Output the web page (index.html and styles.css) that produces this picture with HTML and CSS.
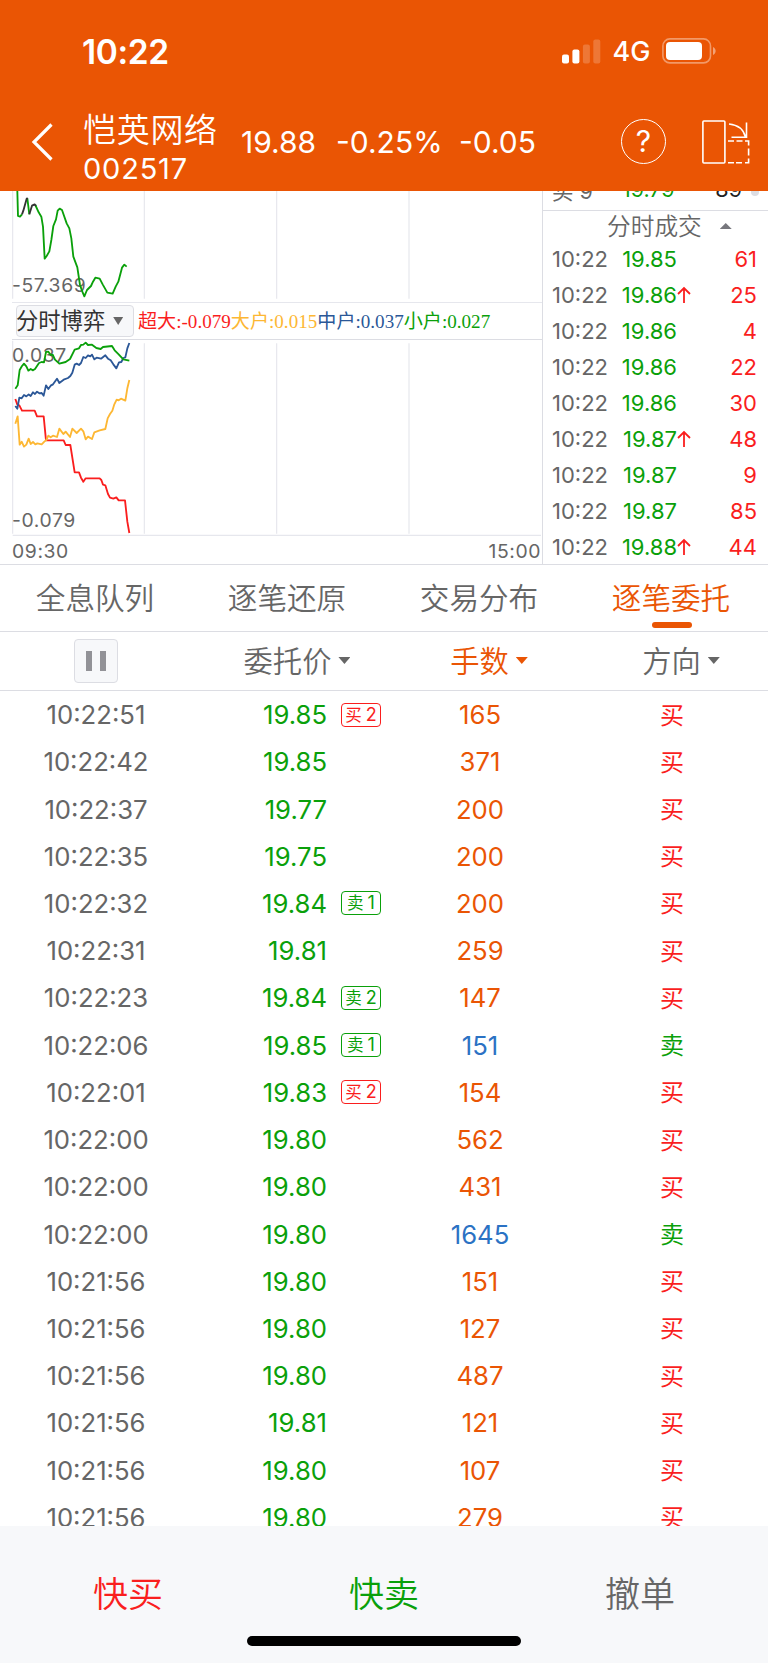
FILE: index.html
```html
<!DOCTYPE html>
<html lang="zh-CN">
  <head>
    <meta charset="UTF-8" />
    <meta name="viewport" content="width=device-width, initial-scale=1.0" />
    <title>恺英网络 002517</title>
    <link rel="stylesheet" href="styles.css">
  </head>
  <body>
    <div class="app">
      <header class="header">
        <div class="status-bar">
          <span class="clock">10:22</span>
          <div class="status-icons">
            <svg class="signal" width="39" height="25" viewBox="0 0 39 25" fill="#fff">
              <rect x="0" y="15.5" width="7" height="9" rx="2" />
              <rect x="10.4" y="10.5" width="7" height="14" rx="2" />
              <rect x="20.9" y="5.5" width="7" height="19" rx="2" opacity="0.2" />
              <rect x="31.3" y="0.5" width="7" height="24" rx="2" opacity="0.2" />
            </svg>
            <span class="network">4G</span>
            <svg class="battery" width="54" height="26" viewBox="0 0 54 26">
              <rect x="0.9" y="0.9" width="47.6" height="24" rx="7" fill="none" stroke="#fff" stroke-opacity="0.4" stroke-width="1.6" />
              <rect x="4" y="4" width="36" height="18" rx="4" fill="#fff" />
              <path d="M51 9c3.5 1.4 3.5 6.600 0 8z" fill="#fff" fill-opacity="0.45" />
            </svg>
          </div>
        </div>
        <nav class="nav">
          <svg class="back" width="24" height="40" viewBox="0 0 24 40" fill="none" stroke="#fff" stroke-width="3.2">
            <path d="M20.500 2.500L3 20l17.500 17.500" />
          </svg>
          <div class="stock">
            <div class="stock-name">恺英网络</div>
            <div class="stock-code">002517</div>
          </div>
          <div class="quote">
            <span class="q-price">19.88</span>
            <span class="q-percent">-0.25%</span>
            <span class="q-change">-0.05</span>
          </div>
          <div class="help">?</div>
          <svg class="rotate" width="48" height="46" viewBox="0 0 48 46" fill="none" stroke="#fff" stroke-width="1.6">
            <rect x="0.900" y="2" width="22" height="42" rx="1" />
            <path d="M27 5c8 .8 14.500 5 16.500 13M44.500 3.500v14.700H29.500" />
            <path d="M26 22h6M34.500 22h6M43 22h3.600v4.500M46.600 29.500v7M46.600 39.500v4.300H43M40 43.800h-6M32 43.800h-6" />
          </svg>
        </nav>
      </header>

      <section class="market">
        <div class="charts">
          <svg class="chart-flow" viewBox="0 33 1623 333" fill="none">
            <path class="grid" d="M38 33V356M433 33V356M830 33V356M1227 33V356" />
            <text class="axis-text" x="36" y="337">-57.369</text>
            <g class="line">
              <path class="c-green" d="M52 33L54 108L60 110L66 103M82 55L88 103M106 75L116 97L124 110L129 140L134 236L140 228L148 214L154 180L160 138L168 118L173 92L179 86L186 90L200 130L208 145L214 175L220 230L232 262L240 315L247 335L253 349L261 330L273 318L279 305L286 293L299 296L308 313L322 338L338 341L347 320L355 305L366 263L373 254L380 260" />
              <path class="c-dark" d="M66 103L70 92L80 56L83 54M88 103L96 77L104 73L108 78" />
            </g>
          </svg>
          <div class="indicator-bar">
            <div class="indicator-select">分时博弈<i class="caret"></i></div>
            <div class="legend"><span class="red">超大:-0.079</span><span class="yellow">大户:0.015</span><span class="navy">中户:0.037</span><span class="green">小户:0.027</span></div>
          </div>
          <svg class="chart-game" viewBox="0 30 1623 672" fill="none">
            <path class="grid" d="M38 32V611M433 40V611M830 40V611M1227 40V611M38 616H1623" />
            <text class="axis-text" x="36" y="96">0.037</text>
            <text class="axis-text" x="36" y="592">-0.079</text>
            <text class="axis-text" x="36" y="683">09:30</text>
            <text class="axis-text" x="1623" y="683" text-anchor="end">15:00</text>
            <g class="line">
              <path class="c-red" d="M46 207L52 224L58 226L66 242H104L111 259H131L138 331H191L197 345H211L224 427H237L243 443L250 455L257 445H299L304 450L309 464L316 466L324 492L330 503L340 506L349 502L356 511H375L382 575L388 609" />
              <path class="c-yellow" d="M46 281L53 259L59 344L65 335L72 350L79 344L86 326L92 342L99 336L106 343L112 340L125 343L133 335L139 330L145 317L152 322L159 317L171 321L178 296L190 312L197 305L210 321L217 296L230 309L243 296L250 304L257 328L264 320L276 327L283 307L299 301L316 297L323 265L330 252L337 242L343 223L350 209L356 211L363 206L376 212L382 175L388 150" />
              <path class="c-navy" d="M46 228L52 236L58 203L65 205L72 195L79 199L86 193L92 198L99 187L105 192L111 185L118 190L125 189L131 197L138 166L145 177L152 167L159 163L171 146L178 159L191 149L204 144L211 138L217 128L224 104L230 101L237 105L243 99L250 81L257 84L264 76L271 79L276 74L283 88L290 83L303 86L316 76L324 86L332 91L340 103L349 115L357 97L364 96L370 84L376 82L382 55L388 39" />
              <path class="c-green" d="M46 176L53 166L59 120L66 108L72 101L79 109L85 122L92 117L99 121L105 117L117 99L125 96L132 97L138 66L145 65L152 75L158 74L165 89L178 101L197 96L210 87L224 59L237 55L243 45L250 44L257 38L264 45L276 44L289 54L302 57L309 51L336 48L344 61L356 73L370 88L388 92" />
            </g>
          </svg>
        </div>

        <aside class="ticks">
          <div class="level-clip">
            <div class="level"><span>买 9</span><span class="green">19.79</span><b>89</b><i class="dot"></i></div>
          </div>
          <div class="ticks-title">分时成交<i class="caret-up"></i></div>
          <div id="tickList"></div>
        </aside>
      </section>

      <div class="tabs">
        <div class="tab">全息队列</div>
        <div class="tab">逐笔还原</div>
        <div class="tab">交易分布</div>
        <div class="tab active">逐笔委托</div>
      </div>

      <div class="columns">
        <div><button class="pause"><i></i><i></i></button></div>
        <div><span class="sort">委托价<i class="caret"></i></span></div>
        <div><span class="sort active">手数<i class="caret"></i></span></div>
        <div><span class="sort">方向<i class="caret"></i></span></div>
      </div>

      <main class="orders" id="orderList"></main>

      <footer class="footer">
        <div class="actions">
          <div class="red">快买</div>
          <div class="green">快卖</div>
          <div>撤单</div>
        </div>
        <div class="home-bar"></div>
      </footer>
    </div>

    <script>
      // price, went up, volume
      const ticks = [
        ["19.85", false, 61],
        ["19.86", true, 25],
        ["19.86", false, 4],
        ["19.86", false, 22],
        ["19.86", false, 30],
        ["19.87", true, 48],
        ["19.87", false, 9],
        ["19.87", false, 85],
        ["19.88", true, 44],
      ];

      // time, price, lots, side, queue tag
      const orders = [
        ["10:22:51", "19.85", 165, "买", "买2"],
        ["10:22:42", "19.85", 371, "买"],
        ["10:22:37", "19.77", 200, "买"],
        ["10:22:35", "19.75", 200, "买"],
        ["10:22:32", "19.84", 200, "买", "卖1"],
        ["10:22:31", "19.81", 259, "买"],
        ["10:22:23", "19.84", 147, "买", "卖2"],
        ["10:22:06", "19.85", 151, "卖", "卖1"],
        ["10:22:01", "19.83", 154, "买", "买2"],
        ["10:22:00", "19.80", 562, "买"],
        ["10:22:00", "19.80", 431, "买"],
        ["10:22:00", "19.80", 1645, "卖"],
        ["10:21:56", "19.80", 151, "买"],
        ["10:21:56", "19.80", 127, "买"],
        ["10:21:56", "19.80", 487, "买"],
        ["10:21:56", "19.81", 121, "买"],
        ["10:21:56", "19.80", 107, "买"],
        ["10:21:56", "19.80", 279, "买"],
      ];

      const arrow = '<svg width="14" height="18" viewBox="0 0 14 18" fill="none" stroke="currentColor" stroke-width="1.8"><path d="M7 17V2M1 8l6-6 6 6" /></svg>';

      document.getElementById("tickList").innerHTML = ticks
        .map(([price, up, volume]) => `
          <div class="tick">
            <span>10:22</span>
            <span class="tick-price">${price}</span>
            <span class="tick-arrow">${up ? arrow : ""}</span>
            <span class="tick-volume">${volume}</span>
          </div>`)
        .join("");

      document.getElementById("orderList").innerHTML = orders
        .map(([time, price, lots, side, tag]) => {
          const sell = side === "卖";
          const tagHtml = tag
            ? `<span class="tag ${tag[0] === "卖" ? "green" : "red"}">${tag[0]}<em>${tag[1]}</em></span>`
            : "";
          return `
          <div class="order">
            <span class="order-time">${time}</span>
            <span class="order-price">${price}</span>
            <span class="order-tag">${tagHtml}</span>
            <span class="order-lots ${sell ? "blue" : "orange"}">${lots}</span>
            <span class="order-side ${sell ? "green" : "red"}">${side}</span>
          </div>`;
        })
        .join("");
    </script>
  </body>
</html>
```
FILE: styles.css
```css
* {
  box-sizing: border-box;
}
body {
  margin: 0;
  font-family: Inter, "Noto Sans CJK SC", sans-serif;
  color: #666;
  background: #fff;
}
.app {
  width: 768px;
  height: 1663px;
  display: flex;
  flex-direction: column;
  overflow: hidden;
}
.red {
  color: #fa1e1e;
}
.green {
  color: #0aa00a;
}
.yellow {
  color: #fdb733;
}
.navy {
  color: #2b5797;
}
.blue {
  color: #2b72c4;
}
.orange {
  color: #ea5504;
}

/* header */
.header {
  height: 191px;
  flex: none;
  background: #ea5504;
  color: #fff;
}
.status-bar {
  height: 102px;
  padding: 0 52px 0 82px;
  display: flex;
  align-items: center;
  justify-content: space-between;
}
.clock {
  padding-top: 1px;
  font-size: 33.500px;
  font-weight: 600;
  letter-spacing: -0.400px;
}
.status-icons {
  display: flex;
  align-items: center;
}
.network {
  width: 61px;
  padding-top: 1px;
  text-align: center;
  font-size: 27px;
  font-weight: 500;
}
.nav {
  height: 89px;
  display: flex;
  align-items: center;
  padding: 0 18px 10px 31px;
}
.stock {
  width: 158px;
  margin-left: 28px;
  padding-top: 12px;
  white-space: nowrap;
}
.stock-name {
  font-size: 33px;
  line-height: 42px;
  letter-spacing: 0.7px;
  font-weight: 350;
}
.stock-code {
  font-size: 29px;
  line-height: 36px;
  letter-spacing: 0.8px;
}
.quote {
  display: flex;
  font-size: 30px;
  white-space: nowrap;
}
.q-price {
  width: 95px;
}
.q-percent {
  width: 123px;
}
.q-change {
  width: 162px;
}
.help {
  width: 45px;
  height: 45px;
  flex: none;
  border: 1.6px solid #fff;
  border-radius: 50%;
  font-size: 30px;
  line-height: 43px;
  text-align: center;
}
.rotate {
  margin-left: auto;
}

/* charts and ticks */
.market {
  height: 374px;
  flex: none;
  display: flex;
  border-bottom: 1.500px solid #dcdde3;
}
.charts {
  width: 542px;
  display: flex;
  flex-direction: column;
}
.chart-flow {
  width: 541px;
  height: 111px;
  flex: none;
}
.chart-game {
  width: 541px;
  height: 224px;
  flex: none;
}
.grid {
  stroke: #e6e7ed;
  stroke-width: 3.5;
}
.axis-text {
  fill: #666;
  font-size: 58px;
  letter-spacing: 1.8px;
}
.line {
  stroke-width: 5.5;
  stroke-linejoin: round;
}
.c-green {
  stroke: #0aa00a;
}
.c-dark {
  stroke: #333;
}
.c-red {
  stroke: #fa1e1e;
}
.c-yellow {
  stroke: #fdb733;
}
.c-navy {
  stroke: #2b5797;
}
.indicator-bar {
  height: 38px;
  flex: none;
  margin-left: 12px;
  padding-left: 4px;
  display: flex;
  align-items: center;
  border-top: 1px solid #e6e7ed;
  border-bottom: 1px solid #dcdde3;
}
.indicator-select {
  width: 118px;
  height: 32px;
  display: flex;
  align-items: center;
  border: 1px solid #dcdde3;
  border-radius: 4px;
  background: #f7f8fa;
  color: #333;
  font-size: 22.300px;
  line-height: 30px;
  text-indent: -1px;
}
.caret {
  width: 12px;
  height: 7px;
  background: currentColor;
  clip-path: polygon(0 0, 100% 0, 50% 100%);
}
.indicator-select .caret {
  width: 10px;
  height: 8px;
  margin-left: 8px;
  background: #666;
}
.legend {
  margin-left: 4px;
  padding-top: 2px;
  font: 19.100px/30px "Liberation Serif", "Noto Sans CJK SC", serif;
  white-space: nowrap;
}
.ticks {
  flex: 1;
  border-left: 1.500px solid #dcdde3;
}
.level-clip {
  height: 20px;
  overflow: hidden;
  border-bottom: 1px solid #dcdde3;
}
.level {
  height: 36px;
  margin-top: -20px;
  padding: 0 9px 0 9px;
  display: flex;
  align-items: center;
  font-size: 21.500px;
}
.level .green {
  margin-left: 29px;
}
.level b {
  margin-left: auto;
  color: #222;
  font-weight: 400;
}
.dot {
  width: 8px;
  height: 8px;
  margin: 5px 0 0 9px;
  border-radius: 50%;
  background: #dcdde3;
}
.ticks-title {
  height: 30px;
  padding: 0 0 3px 64px;
  display: flex;
  align-items: center;
  font-size: 23.700px;
  font-weight: 350;
}
.caret-up {
  width: 12px;
  height: 6px;
  margin: 3px 0 0 18px;
  background: #77777d;
  clip-path: polygon(50% 0, 100% 100%, 0 100%);
}
.tick {
  height: 36px;
  padding: 0 11px 0 9px;
  display: grid;
  grid-template-columns: 59px 66px 20px 1fr;
  align-items: center;
  font-size: 22px;
}
.tick-price {
  text-align: right;
  color: #0aa00a;
}
.tick-arrow {
  height: 18px;
  display: flex;
  color: #fa1e1e;
}
.tick-volume {
  text-align: right;
  color: #fa1e1e;
}

/* tabs */
.tabs {
  height: 67px;
  flex: none;
  display: grid;
  grid-template-columns: repeat(4, 1fr);
  border-bottom: 1.500px solid #dcdde3;
}
.tab {
  position: relative;
  padding-right: 2px;
  font-size: 29.600px;
  font-weight: 350;
  line-height: 66px;
  text-align: center;
}
.tab.active {
  color: #ea5504;
}
.tab.active::after {
  content: "";
  position: absolute;
  left: 76px;
  bottom: 3px;
  width: 40px;
  height: 6px;
  border-radius: 3px;
  background: #ea5504;
}
.columns {
  height: 59px;
  flex: none;
  display: grid;
  grid-template-columns: repeat(4, 1fr);
  align-items: center;
  justify-items: center;
  border-bottom: 1.500px solid #dcdde3;
}
.pause {
  width: 44px;
  height: 44px;
  padding: 0;
  display: flex;
  align-items: center;
  justify-content: center;
  gap: 8px;
  border: 1.500px solid #dcdde3;
  border-radius: 4px;
  background: #f7f8fa;
}
.pause i {
  width: 6px;
  height: 20px;
  background: #929297;
}
.sort {
  margin: -4px -18px 0 0;
  display: flex;
  align-items: center;
  gap: 7px;
  font-size: 29.300px;
  font-weight: 350;
}
.sort .caret {
  margin-top: 3px;
}
.sort.active {
  color: #ea5504;
}

/* order list */
.orders {
  height: 835px;
  flex: none;
  overflow: hidden;
}
.order {
  height: 47.230px;
  display: grid;
  grid-template-columns: 192px 135px 57px 192px 192px;
  align-items: center;
  font-size: 25.700px;
}
.order-time,
.order-lots,
.order-side {
  text-align: center;
}
.order-side {
  padding-bottom: 3px;
  font-size: 24px;
}
.order-price {
  text-align: right;
  color: #0aa00a;
}
.order-tag {
  padding-left: 14px;
}
.tag {
  width: 40px;
  height: 24px;
  display: flex;
  align-items: center;
  justify-content: center;
  gap: 4px;
  border: 1px solid currentColor;
  border-radius: 4px;
  font-size: 16.500px;
  line-height: 20px;
}
.tag em {
  font-style: normal;
  font-size: 18px;
}

/* bottom actions */
.footer {
  flex: 1;
  background: #f7f8fa;
}
.actions {
  height: 110px;
  display: grid;
  grid-template-columns: repeat(3, 1fr);
  font-size: 35px;
  font-weight: 350;
  line-height: 136px;
  text-align: center;
}
.home-bar {
  width: 274px;
  height: 10px;
  margin: 0 auto;
  border-radius: 5px;
  background: #000;
}
```
